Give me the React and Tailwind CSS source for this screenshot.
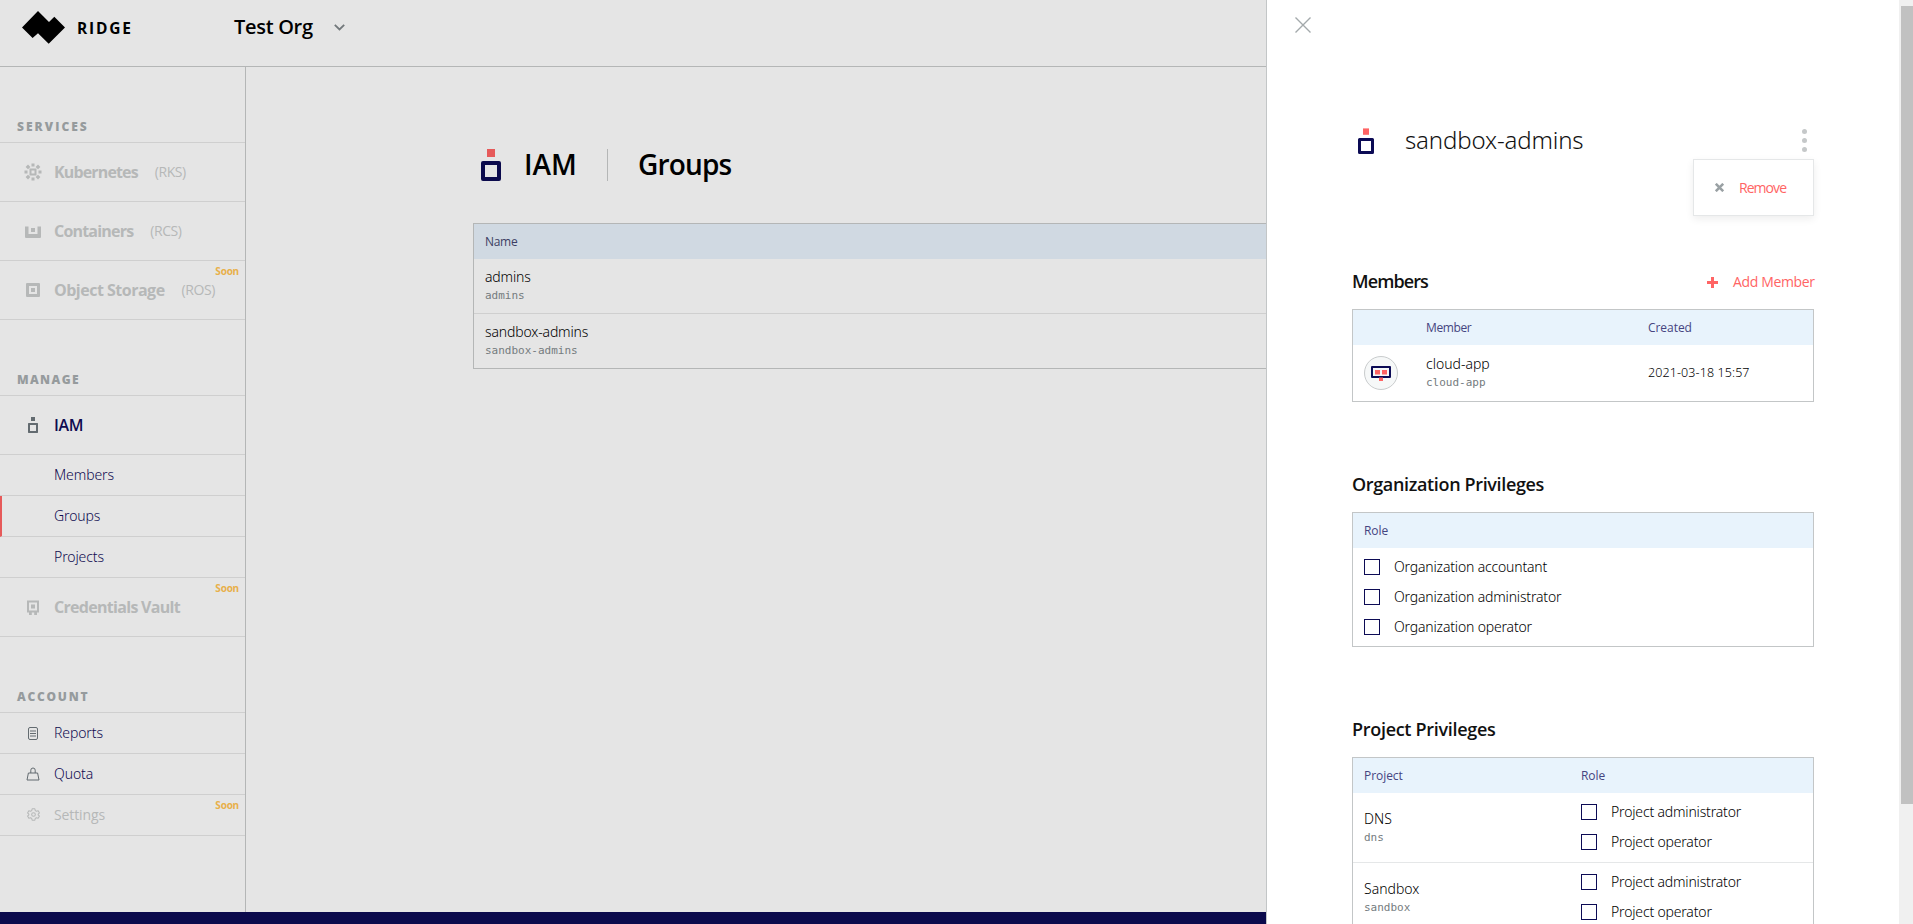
const MONO = "font-['DejaVu_Sans_Mono',monospace]";
const LIGHT = "font-['Noto_Sans',sans-serif] font-light";

function Logo() {
  return (
    <svg width="43" height="33" viewBox="0 0 43 33" className="shrink-0">
      <path d="M16 0 L27 11 L32.3 5.7 L43 16.4 L26.7 32.8 L16 22.2 L10.6 27 L0 16.4 Z" fill="#000" />
    </svg>
  );
}

function KubernetesIcon() {
  return (
    <svg width="18" height="18" viewBox="0 0 18 18" fill="currentColor">
      <path fillRule="evenodd" d="M5.5 5.5h7v7h-7z M7.5 7.5v3h3v-3z" />
      <path d="M7.5 .5h3v3h-3z M7.5 14.5h3v3h-3z M.5 7.5h3v3h-3z M14.5 7.5h3v3h-3z" />
      <path d="M4 1.5l2.4 2.4L4 6.3 1.6 3.9z M14 1.5l2.4 2.4L14 6.3l-2.4-2.4z M4 11.7l2.4 2.4L4 16.5l-2.4-2.4z M14 11.7l2.4 2.4-2.4 2.4-2.4-2.4z" />
    </svg>
  );
}

function ContainersIcon() {
  return (
    <svg width="16" height="12" viewBox="0 0 16 12" fill="currentColor" className="mt-px">
      <path d="M0 .5h3.5V8h9V.5H16V11a1 1 0 0 1-1 1H1a1 1 0 0 1-1-1z M6 2h4v4H6z" />
    </svg>
  );
}

function StorageIcon() {
  return (
    <svg width="14" height="14" viewBox="0 0 14 14" fill="currentColor">
      <path fillRule="evenodd" d="M1 0h12a1 1 0 0 1 1 1v12a1 1 0 0 1-1 1H1a1 1 0 0 1-1-1V1a1 1 0 0 1 1-1z M3 3v8h8V3z M5 5h4v4H5z" />
    </svg>
  );
}

function IamSmallIcon() {
  return (
    <svg width="10" height="16" viewBox="0 0 10 16" fill="#636b70">
      <path d="M3 0h4v4H3z" />
      <path fillRule="evenodd" d="M.5 6h9l.5.5v9l-.5.5h-9L0 15.5v-9z M2 8v6h6V8z" />
    </svg>
  );
}

function VaultIcon() {
  return (
    <svg width="12" height="16" viewBox="0 0 12 16" fill="currentColor" className="mt-0.5">
      <path fillRule="evenodd" d="M0 .5h12v12h-2V15H7.2v-2.5H4.8V15H2v-2.5H0z M2 2.5v8h8v-8z M4 4.5h4v4H4z" />
    </svg>
  );
}

function ReportsIcon() {
  return (
    <svg width="10" height="13" viewBox="0 0 10 13" fill="none" stroke="#636b70">
      <rect x=".5" y=".5" width="9" height="12" rx="1.5" />
      <path d="M2 4h6M2 6.5h6M2 9h6" />
    </svg>
  );
}

function QuotaIcon() {
  return (
    <svg width="14" height="14" viewBox="0 0 14 14" fill="none" stroke="#636b70" strokeLinejoin="round">
      <path d="M2.4 6h9.2l1.4 7H1z" />
      <path d="M4.8 6V3.2a2.2 2.2 0 0 1 4.4 0V6" />
    </svg>
  );
}

function SettingsIcon() {
  return (
    <svg width="13" height="13" viewBox="0 0 24 24" fill="none" stroke="currentColor" strokeWidth="1.9" className="-mt-0.5">
      <path strokeLinejoin="round" d="M9.5 1.5h5l.8 3.3 2 1.2 3.3-1 2.4 4.2-2.4 2.3v1l2.4 2.3-2.4 4.2-3.3-1-2 1.2-.8 3.3h-5l-.8-3.3-2-1.2-3.3 1L1 14.8l2.4-2.3v-1L1 9.2 3.4 5l3.3 1 2-1.2z" />
      <circle cx="12" cy="12" r="3.4" />
    </svg>
  );
}

function GroupIcon({ small }) {
  return small ? (
    <svg width="16" height="26" viewBox="0 0 16 26" className="shrink-0">
      <path d="M5 .4h6v6.4H5z" fill="#ff6464" />
      <rect x="1.5" y="11.5" width="13" height="13" fill="none" stroke="#0c0b55" strokeWidth="3" strokeLinejoin="round" />
    </svg>
  ) : (
    <svg width="20" height="32" viewBox="0 0 20 32" className="shrink-0">
      <path d="M6 0h8v8H6z" fill="#e65a5a" />
      <rect x="2" y="14" width="16" height="16" fill="none" stroke="#0b0a4c" strokeWidth="4" strokeLinejoin="round" />
    </svg>
  );
}

function SectionLabel({ children, track = "tracking-[1.75px]" }) {
  return (
    <div className={"flex h-[76px] items-end border-b border-[#cfcfcf] pb-[7px] pl-[17px] text-xs leading-4 font-extrabold text-[#969b9d] " + track}>
      {children}
    </div>
  );
}

function Soon() {
  return (
    <span className="absolute top-[3px] right-[6px] text-[10px] leading-[14px] font-bold tracking-[-0.2px] text-[#e8b04a]">Soon</span>
  );
}

function NavItem({ icon, label, code, soon, disabled, track }) {
  return (
    <div className={"relative flex h-[59px] items-center border-b border-[#cfcfcf] pl-[22px] " + (disabled ? "text-[#b6b8b8]" : "text-[#0f0b50]")}>
      <span className="flex w-[22px] justify-center">{icon}</span>
      <span className={"pl-2.5 text-base " + (disabled ? "font-bold " : "font-semibold ") + track}>{label}</span>
      {code && <span className="pl-[17px] text-sm tracking-[-0.45px]">{code}</span>}
      {soon && <Soon />}
    </div>
  );
}

function SubItem({ icon, label, active, soon, disabled }) {
  return (
    <div
      className={
        "relative flex h-[41px] items-center border-b border-[#cfcfcf] text-sm " +
        (active ? "border-l-2 border-l-[#e65a5a] pl-5 " : "pl-[22px] ") +
        (disabled ? "text-[#b6b8b8]" : LIGHT + " text-[#0f0b50]")
      }
    >
      <span className="flex w-[22px] justify-center">{icon}</span>
      <span className="pl-2.5 tracking-[-0.1px]">{label}</span>
      {soon && <Soon />}
    </div>
  );
}

function NameCell({ name, dark }) {
  return (
    <div>
      <div className={LIGHT + " text-sm leading-5 text-black " + (dark ? "tracking-[-0.15px]" : "tracking-normal")}>{name[0]}</div>
      <div className={MONO + " text-[11px] leading-[18px] text-[#747b7e]"}>{name[1]}</div>
    </div>
  );
}

function Role({ label }) {
  return (
    <label className="flex h-[30px] items-center">
      <span className="size-4 border border-[#0c0b55]" />
      <span className={LIGHT + " pl-3.5 text-sm leading-4 tracking-[-0.17px] text-black"}>{label}</span>
    </label>
  );
}

const TH = "text-xs text-[#454480] tracking-[-0.05px]";
const TITLE = "text-lg leading-6 font-semibold text-[#111]";

function Sidebar() {
  return (
    <nav className="w-[246px] shrink-0 border-r border-[#b4b6b6]">
      <SectionLabel track="tracking-[2.05px]">SERVICES</SectionLabel>
      <NavItem icon={<KubernetesIcon />} label="Kubernetes" code="(RKS)" track="tracking-[-0.85px]" disabled />
      <NavItem icon={<ContainersIcon />} label="Containers" code="(RCS)" track="tracking-[-0.8px]" disabled />
      <NavItem icon={<StorageIcon />} label="Object Storage" code="(ROS)" track="tracking-[-0.5px]" disabled soon />
      <SectionLabel track="tracking-[1.4px]">MANAGE</SectionLabel>
      <NavItem icon={<IamSmallIcon />} label="IAM" track="tracking-[-0.4px]" />
      <SubItem label="Members" />
      <SubItem label="Groups" active />
      <SubItem label="Projects" />
      <NavItem icon={<VaultIcon />} label="Credentials Vault" track="tracking-[-0.7px]" disabled soon />
      <SectionLabel>ACCOUNT</SectionLabel>
      <SubItem icon={<ReportsIcon />} label="Reports" />
      <SubItem icon={<QuotaIcon />} label="Quota" />
      <SubItem icon={<SettingsIcon />} label="Settings" disabled soon />
    </nav>
  );
}

function GroupsPage() {
  return (
    <main className="flex-1 pt-[82px] pl-[227px]">
      <div className="flex h-8 items-center pl-2 text-[28px] font-semibold text-black">
        <GroupIcon />
        <h1 className="w-[106px] pb-0.5 pl-[23px] tracking-normal">IAM</h1>
        <span className="h-8 w-px bg-[#b4b6b6]" />
        <h2 className="pb-0.5 pl-[30px] tracking-[-0.85px]">Groups</h2>
      </div>
      <div className="mt-[42px] border border-r-0 border-[#b4b6b6]">
        <div className="flex h-[35px] items-center bg-[#d0d9e2] pl-[11px] text-xs tracking-[-0.3px] text-[#3c3e63]">Name</div>
        <div className="flex h-[55px] items-center border-b border-[#cfcfcf] pl-[11px]">
          <NameCell name={["admins", "admins"]} dark />
        </div>
        <div className="flex h-[54px] items-center pl-[11px]">
          <NameCell name={["sandbox-admins", "sandbox-admins"]} dark />
        </div>
      </div>
    </main>
  );
}

function GroupPanel() {
  return (
    <aside className="relative h-full w-[633px] shrink-0 overflow-hidden border-l border-[#c3c6c7] bg-white pr-[85px] pl-[85px]">
      <svg width="16" height="16" viewBox="0 0 16 16" stroke="#a3a9ab" strokeWidth="1.4" className="mt-[17px] -ml-[57px]">
        <path d="M.5 .5l15 15M15.500 .5l-15 15" />
      </svg>
      <div className="relative mt-[95px] flex h-[26px] items-center pl-1.5">
        <GroupIcon small />
        <span className={LIGHT + " pb-0.5 pl-[31px] text-2xl leading-6 tracking-[-0.15px] text-[#111]"}>sandbox-admins</span>
        <span className="mr-[7px] mb-0.5 ml-auto flex flex-col gap-1">
          <i className="size-[5px] rounded-full bg-[#c5c8c9]" />
          <i className="size-[5px] rounded-full bg-[#c5c8c9]" />
          <i className="size-[5px] rounded-full bg-[#c5c8c9]" />
        </span>
        <div className="absolute top-[31px] right-0 flex h-[57px] w-[121px] items-center border border-[#e5e7e8] bg-white pl-[21px] shadow-[0_3px_8px_rgba(0,0,0,0.07)]">
          <svg width="9" height="9" viewBox="0 0 9 9" stroke="#9aa1a4" strokeWidth="2.6">
            <path d="M.8 .8l7.400 7.400M8.200 .8l-7.400 7.400" />
          </svg>
          <span className="pl-[15px] text-sm tracking-[-0.95px] text-[#ff6464]">Remove</span>
        </div>
      </div>

      <div className="mt-[115px] flex h-6 items-center">
        <h3 className={TITLE + " tracking-[-0.9px]"}>Members</h3>
        <svg width="11" height="11" viewBox="0 0 11 11" className="mt-[3px] ml-auto" fill="#ff6464">
          <path d="M4 0h3v4h4v3H7v4H4V7H0V4h4z" />
        </svg>
        <span className="mt-0.5 w-24 pl-[15px] text-sm tracking-[-0.35px] whitespace-nowrap text-[#ff6464]">Add Member</span>
      </div>
      <div className="mt-4 border border-[#c3c6c7]">
        <div className={TH + " flex h-[35px] items-center bg-[#e8f3fc] pl-[73px]"}>
          <span className="w-[222px] tracking-[-0.4px]">Member</span>
          <span>Created</span>
        </div>
        <div className="flex h-14 items-center pl-[11px]">
          <span className="flex size-[34px] items-center justify-center rounded-full border border-[#c9cccd] bg-[#f6f8f8]">
            <svg width="20" height="16" viewBox="0 0 20 16">
              <rect x="1" y="2" width="18" height="10" fill="none" stroke="#0c0b55" strokeWidth="2" strokeLinejoin="round" />
              <path d="M4 5h5v4.500H4z M11 5h5v4.500h-5z M8 12.500h4V16H8z" fill="#ff6464" />
            </svg>
          </span>
          <div className="w-[250px] pl-7">
            <NameCell name={["cloud-app", "cloud-app"]} />
          </div>
          <span className={LIGHT + " text-[12.500px] tracking-[0.1px] text-black"}>2021-03-18 15:57</span>
        </div>
      </div>

      <h3 className={TITLE + " mt-[70px] tracking-[-0.35px]"}>Organization Privileges</h3>
      <div className="mt-4 border border-[#c3c6c7]">
        <div className={TH + " flex h-[35px] items-center bg-[#e8f3fc] pl-[11px]"}>Role</div>
        <div className="pt-1 pb-1 pl-[11px]">
          <Role label="Organization accountant" />
          <Role label="Organization administrator" />
          <Role label="Organization operator" />
        </div>
      </div>

      <h3 className={TITLE + " mt-[70px] tracking-[-0.3px]"}>Project Privileges</h3>
      <div className="mt-4 border border-[#c3c6c7]">
        <div className={TH + " flex h-[35px] items-center bg-[#e8f3fc] pl-[11px]"}>
          <span className="w-[217px]">Project</span>
          <span>Role</span>
        </div>
        {[["DNS", "dns"], ["Sandbox", "sandbox"]].map((p) => (
          <div key={p[1]} className="flex h-[70px] items-center border-b border-[#e5e7e8] pl-[11px]">
            <div className="w-[217px]">
              <NameCell name={p} />
            </div>
            <div className="pb-0.5">
              <Role label="Project administrator" />
              <Role label="Project operator" />
            </div>
          </div>
        ))}
      </div>
    </aside>
  );
}

export default function App() {
  return (
    <div className="flex h-[924px] w-[1913px] overflow-hidden bg-[#e5e5e5] font-['Open_Sans',sans-serif]">
      <div className="flex min-w-0 flex-1 flex-col overflow-hidden">
        <header className="flex h-[67px] shrink-0 items-start border-b border-[#b4b6b6] pl-[22px]">
          <div className="flex w-[212px] pt-[11px]">
            <Logo />
            <span className="pt-[5px] pl-3 text-[15.5px] leading-6 font-bold tracking-[1.8px] text-black">RIDGE</span>
          </div>
          <div className="flex items-center pt-[13px] text-black">
            <span className="w-[100px] text-xl leading-7 font-semibold tracking-[-0.3px] whitespace-nowrap">Test Org</span>
            <svg width="11" height="7" viewBox="0 0 11 7" fill="none" stroke="#72787b" strokeWidth="1.800">
              <path d="M.8 .8l4.700 4.700L10.200 .8" />
            </svg>
          </div>
        </header>
        <div className="flex min-h-0 flex-1">
          <Sidebar />
          <GroupsPage />
        </div>
        <footer className="h-3 shrink-0 bg-[#0b0a4c]" />
      </div>
      <GroupPanel />
      <div className="h-full w-3.5 shrink-0 bg-[#f0f0f0] pt-1.5 pl-0.5">
        <div className="h-[798px] bg-[#c1c1c1]" />
      </div>
    </div>
  );
}
